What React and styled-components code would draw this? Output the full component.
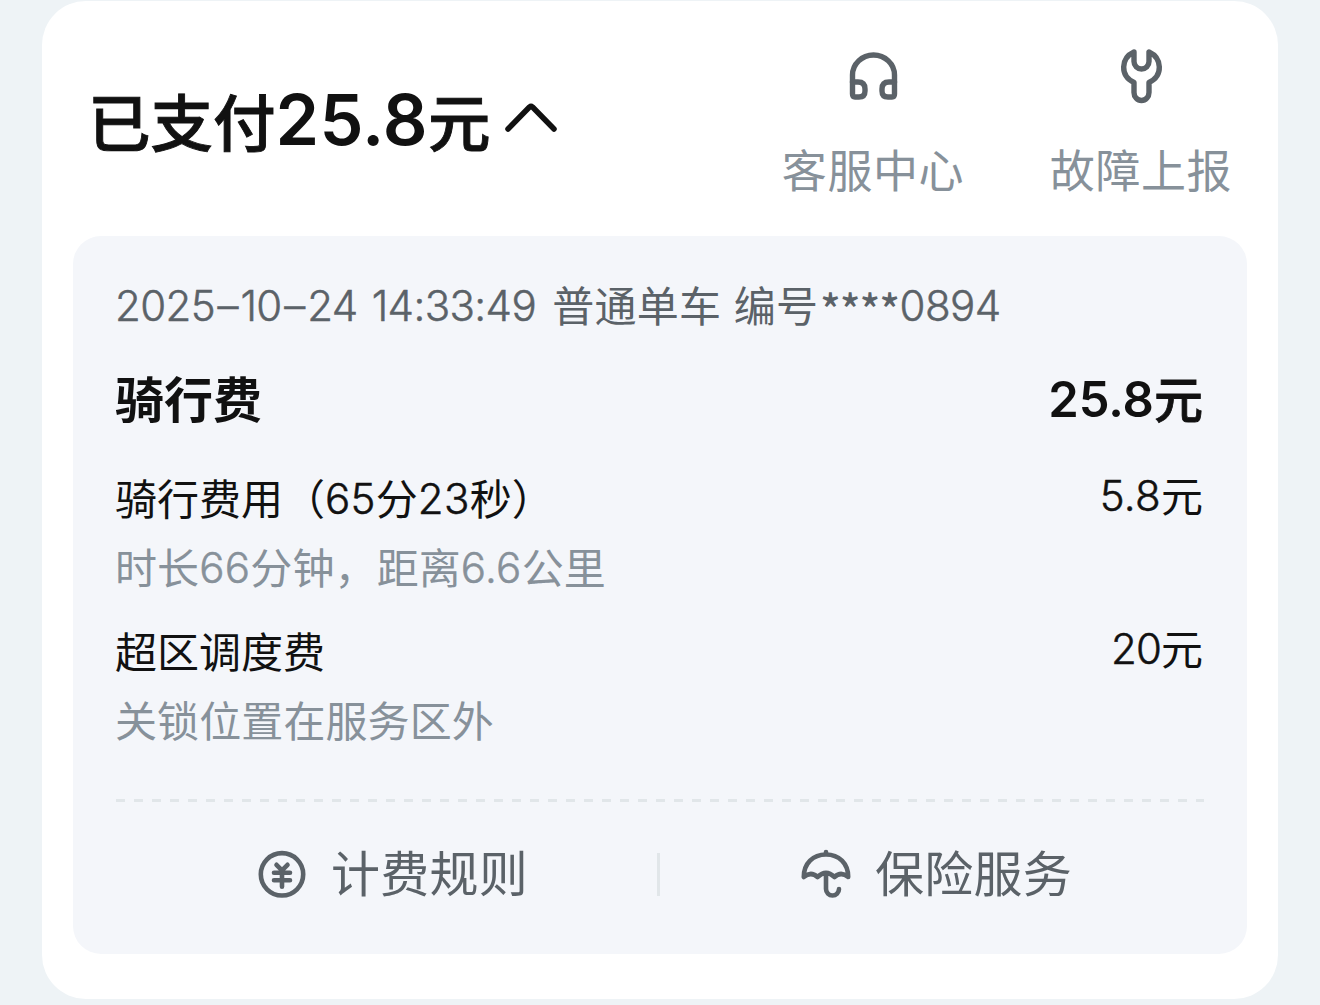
import styled, { createGlobalStyle } from "styled-components";

const GlobalStyle = createGlobalStyle`
  * {
    box-sizing: border-box;
  }
  body {
    margin: 0;
    background: #eef3f6;
    font-family: "Noto Sans CJK SC", sans-serif;
  }
`;
const Page = styled.div`
  width: 1320px;
  height: 1005px;
  padding: 1px 42px 6px;
  overflow: hidden;
  background: #eef3f6;
`;
const Card = styled.section`
  height: 998px;
  padding: 0 31px 45px;
  border-radius: 44px;
  background: #ffffff;
`;
const Header = styled.header`
  height: 235px;
  display: flex;
  align-items: flex-start;
  justify-content: space-between;
  padding: 0 14px 0 15px;
`;
const Title = styled.h1`
  display: flex;
  align-items: center;
  margin: 79px 0 0;
  font-size: 62.5px;
  line-height: 80px;
  font-weight: 500;
  color: #111111;
  -webkit-text-stroke: 0.9px #111111;
  white-space: nowrap;
`;
const Num = styled.span`
  font-family: Inter, sans-serif;
  font-size: ${(props) => props.$size || "1em"};
  font-weight: ${(props) => props.$weight || 300};
  letter-spacing: ${(props) => props.$spacing || "0.3px"};
  line-height: 1;
  vertical-align: ${(props) => props.$raise || "1px"};
  -webkit-text-stroke: ${(props) => (props.$weight ? "0" : "0.5px currentColor")};
`;
const Dash = styled.span`
  margin: 0 2.5px;
`;
const Mask = styled.span`
  margin-left: 2px;
  font-weight: 500;
  letter-spacing: -0.5px;
  line-height: 1;
  vertical-align: -4px;
`;
const Chevron = styled.svg`
  width: 54px;
  height: 30px;
  margin: -5px 0 0 14px;
`;
const Services = styled.nav`
  display: flex;
  gap: 84px;
  padding-top: 45px;
`;
const Service = styled.a`
  width: 184px;
  display: flex;
  flex-direction: column;
  align-items: center;
  font-size: 45px;
  line-height: 60px;
  letter-spacing: 0.6px;
  font-weight: 400;
  color: #87919a;
  white-space: nowrap;
`;
const ServiceIcon = styled.svg`
  width: 60px;
  height: 60px;
  margin-bottom: 33px;
`;
const Panel = styled.div`
  height: 718px;
  padding: 38px 43px 0 42px;
  border-radius: 28px;
  background: #f4f6fa;
`;
const Meta = styled.p`
  height: 60px;
  margin: 0;
  font-size: 42px;
  line-height: 60px;
  letter-spacing: 0.2px;
  word-spacing: 3px;
  font-weight: 400;
  color: #5b6268;
  white-space: pre;
`;
const Time = styled(Num)`
  margin-right: 2px;
`;
const Row = styled.div`
  display: flex;
  justify-content: space-between;
  height: 60px;
  margin-top: ${(props) => props.$top};
  padding-right: 1px;
  font-size: ${(props) => (props.$total ? "49px" : "42px")};
  line-height: 60px;
  font-weight: ${(props) => (props.$total ? 700 : 400)};
  color: #111111;
  white-space: nowrap;
`;
const Amount = styled.span`
  font-weight: ${(props) => (props.$total ? 500 : 400)};
  margin-top: ${(props) => (props.$total ? "0" : "-3px")};
  -webkit-text-stroke: ${(props) => (props.$total ? "0.8px #111111" : "0")};
`;
const Note = styled.p`
  height: 60px;
  margin: 9px 0 0;
  font-size: 42px;
  line-height: 60px;
  letter-spacing: 0.1px;
  font-weight: 400;
  color: #87919a;
  white-space: nowrap;
`;
const Dashes = styled.div`
  height: 3px;
  margin: 50px 0 0 1px;
  background: repeating-linear-gradient(90deg, #e1e6e9 0 9px, transparent 9px 18px);
`;
const Footer = styled.footer`
  display: flex;
  align-items: center;
  height: 60px;
  margin: 42px 0 0 1px;
`;
const Action = styled.a`
  flex: 1;
  display: flex;
  align-items: center;
  justify-content: center;
  gap: 24px;
  padding-left: 9px;
  font-size: 49px;
  line-height: 60px;
  letter-spacing: 0.3px;
  font-weight: 400;
  color: #5b6268;
`;
const ActionLabel = styled.span`
  margin-top: -6px;
`;
const ActionIcon = styled.svg`
  width: 50px;
  height: 50px;
`;
const Divider = styled.i`
  width: 3px;
  height: 43px;
  margin-left: -3px;
  background: #e1e6e9;
`;

const stroke = {
  fill: "none",
  stroke: "#5b6268",
  strokeWidth: 5.4,
  strokeLinecap: "round",
  strokeLinejoin: "round",
};

export default function App() {
  return (
    <>
      <GlobalStyle />
      <Page>
        <Card>
          <Header>
            <Title>
              <span>
                已支付<Num $size="70px" $weight="600" $raise="2px">25.8</Num>元
              </span>
              <Chevron viewBox="0 0 54 30" fill="none" stroke="#111111" strokeWidth="5.5" strokeLinecap="round" strokeLinejoin="round">
                <path d="M4 26 L25.5 4 Q27 2.7 28.5 4 L50 26" />
              </Chevron>
            </Title>
            <Services>
              <Service>
                <ServiceIcon viewBox="0 0 60 60" {...stroke}>
                  <path d="M9.5 36 V29 A21 20 0 0 1 51.5 29 V36" />
                  <path d="M9.5 36 H15 Q22 36 22 43 V45 Q22 51 16 51 H12 Q9.5 51 9.5 48 Z" />
                  <path d="M51.5 36 H46 Q39 36 39 43 V45 Q39 51 45 51 H49 Q51.5 51 51.5 48 Z" />
                </ServiceIcon>
                客服中心
              </Service>
              <Service>
                <ServiceIcon viewBox="0 0 60 60" {...stroke}>
                  <path d="M23 6 C10 12 8.5 29.5 23 36.5 V46.5 A7.5 8 0 0 0 38 46.5 V36.5 C52.5 29.5 51 12 38 6 V15.5 A7.5 7.5 0 0 1 23 15.5 Z" />
                </ServiceIcon>
                故障上报
              </Service>
            </Services>
          </Header>
          <Panel>
            <Meta>
              <Time $spacing="-0.6px">
                2025<Dash>–</Dash>10<Dash>–</Dash>24 14:33:49{" "}
              </Time>
              普通单车 编号<Mask>****</Mask>
              <Num $spacing="-0.5px">0894</Num>
            </Meta>
            <Row $total $top="33px">
              <span>骑行费</span>
              <Amount $total>
                <Num $weight="600" $spacing="0">25.8</Num>元
              </Amount>
            </Row>
            <Row $top="40px">
              <span>
                骑行费用（<Num>65</Num>分<Num>23</Num>秒）
              </span>
              <Amount>
                <Num>5.8</Num>元
              </Amount>
            </Row>
            <Note>
              时长<Num>66</Num>分钟，距离<Num>6.6</Num>公里
            </Note>
            <Row $top="24px">
              <span>超区调度费</span>
              <Amount>
                <Num $spacing="-0.9px">20</Num>元
              </Amount>
            </Row>
            <Note>关锁位置在服务区外</Note>
            <Dashes />
            <Footer>
              <Action>
                <ActionIcon viewBox="0 0 50 50" {...stroke} strokeWidth="4.6">
                  <circle cx="25" cy="25.3" r="21.2" />
                  <path d="M19.5 15.8 L25 21.3 L30.5 15.8 M17 23.8 H33 M17 31.3 H33 M25 21.3 V37.8" />
                </ActionIcon>
                <ActionLabel>计费规则</ActionLabel>
              </Action>
              <Divider />
              <Action>
                <ActionIcon viewBox="0 0 50 50" {...stroke} strokeWidth="4.6">
                  <path d="M25 3 V5.5 M2.8 28 C2.8 14.5 12 5.5 25 5.5 S47.2 14.5 47.2 28 Q40 22 33.5 28 Q25 20 16.5 28 Q10 22 2.8 28 Z" />
                  <path d="M25 25 V40 A6.5 6.5 0 0 0 38 40" />
                </ActionIcon>
                <ActionLabel>保险服务</ActionLabel>
              </Action>
            </Footer>
          </Panel>
        </Card>
      </Page>
    </>
  );
}
